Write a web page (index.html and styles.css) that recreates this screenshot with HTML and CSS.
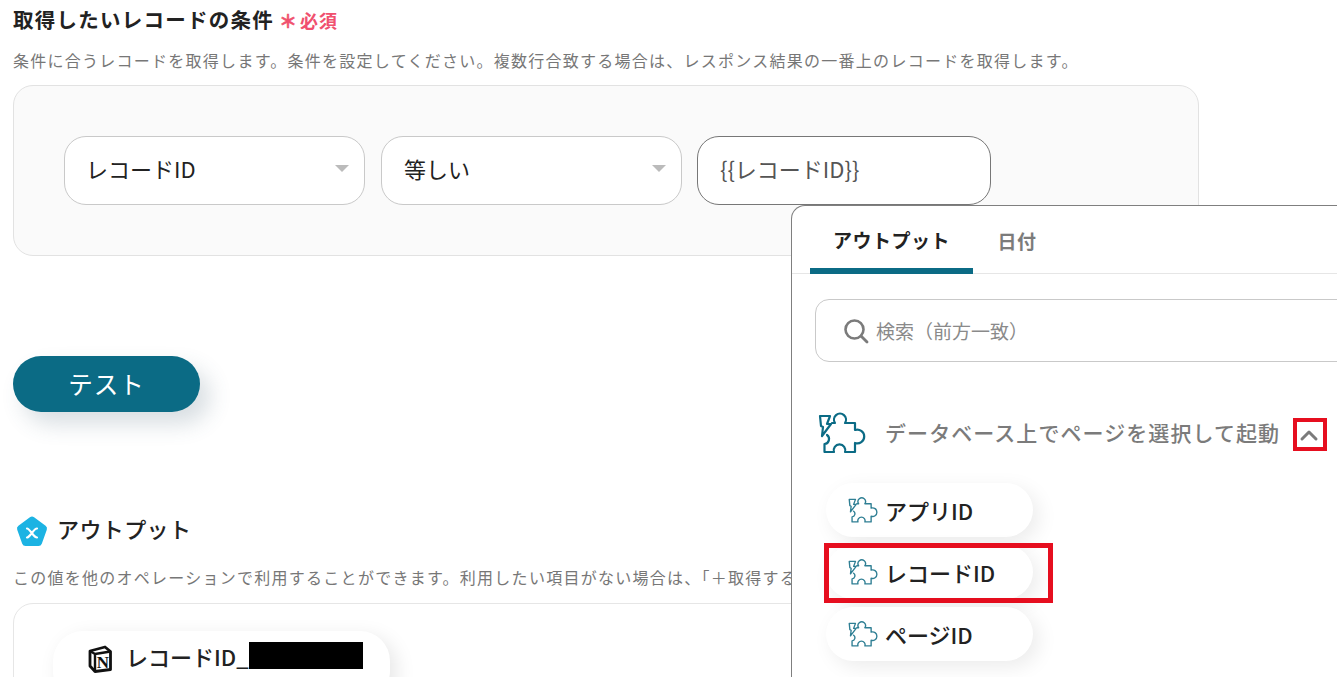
FILE: index.html
```html
<!DOCTYPE html>
<html lang="ja">
<head>
    <meta charset="UTF-8">
    <meta name="viewport" content="width=device-width, initial-scale=1.0">
    <title>取得したいレコードの条件</title>
    <link rel="stylesheet" href="styles.css">
</head>
<body>
    <svg class="defs" width="0" height="0" aria-hidden="true">
        <symbol id="puzzle" viewBox="13 10 48 44">
            <path d="M15 15 H25 L22 23 H26 L17 35 L18 26 L16 25 Z" fill="none" stroke="currentColor" stroke-width="2.2" stroke-linejoin="round"/>
            <path d="M27 22 H30 A6 6 0 1 1 40 22 H50 V29 A6.9 6.9 0 1 1 50 42 V51 H40 A5.8 5.8 0 1 0 29 51 H19.5 V43 A5 5 0 0 0 22 34" fill="none" stroke="currentColor" stroke-width="2.2" stroke-linejoin="round" stroke-linecap="round"/>
        </symbol>
    </svg>

    <div class="page">
        <h2 class="field-title">取得したいレコードの条件<span class="required"><span class="star">＊</span>必須</span></h2>
        <p class="help">条件に合うレコードを取得します。条件を設定してください。複数行合致する場合は、レスポンス結果の一番上のレコードを取得します。</p>

        <div class="condition-box">
            <div class="select select-field">レコードID<span class="caret"></span></div>
            <div class="select select-op">等しい<span class="caret"></span></div>
            <div class="select select-value">{{レコードID}}</div>
        </div>

        <button class="test-btn">テスト</button>

        <h2 class="output-title">
            <svg class="x-logo" width="32" height="36" viewBox="0 0 32 36">
                <path d="M16 10 L27.5 18.5 L22.5 32.5 H9.5 L4.5 18.5 Z" fill="#1cb3e3" stroke="#1cb3e3" stroke-width="7" stroke-linejoin="round"/>
                <path d="M11 18.5 C14 18.5 17.5 27.5 21 27.5 M21 18.5 C17.5 18.5 14 27.5 11 27.5" fill="none" stroke="#fff" stroke-width="2.2" stroke-linecap="round"/>
            </svg>
            アウトプット
        </h2>
        <p class="help help-output">この値を他のオペレーションで利用することができます。利用したい項目がない場合は、「＋取得する</p>

        <div class="output-box">
            <div class="output-chip">
                <svg class="notion" width="24" height="28" viewBox="0 0 24 28">
                    <path d="M2 6 L17 2 L22.5 6.5 V24.5 L7 26.5 L2 21 Z" fill="#fff" stroke="#111" stroke-width="2.8" stroke-linejoin="round"/>
                    <path d="M7 9 L22.5 6.5 M7 9 V26 M2 6 L7 9" fill="none" stroke="#111" stroke-width="2.4"/>
                    <text x="14.8" y="23" text-anchor="middle" class="notion-n">N</text>
                </svg>
                <span>レコードID_</span>
                <span class="redacted"></span>
            </div>
        </div>
    </div>

    <div class="popup">
        <div class="tabs">
            <div class="tab tab-active">アウトプット</div>
            <div class="tab">日付</div>
        </div>
        <div class="search">
            <svg width="26" height="26" viewBox="0 0 26 26">
                <circle cx="11.5" cy="11.5" r="9" fill="none" stroke="#7b7b7b" stroke-width="2.6"/>
                <path d="M18 18 L24 24" stroke="#7b7b7b" stroke-width="2.8" stroke-linecap="round"/>
            </svg>
            <span>検索（前方一致）</span>
        </div>
        <div class="group-head">
            <svg class="group-icon" width="48" height="44"><use href="#puzzle"/></svg>
            <span class="group-name">データベース上でページを選択して起動</span>
            <svg class="chevron" width="20" height="14" viewBox="0 0 20 14">
                <path d="M3 11 L10 4 L17 11" fill="none" stroke="#7b7b7b" stroke-width="3" stroke-linecap="round" stroke-linejoin="round"/>
            </svg>
            <span class="mark mark-chevron"></span>
        </div>
        <div class="items">
            <div class="item">
                <svg width="30" height="28"><use href="#puzzle"/></svg>アプリID
            </div>
            <div class="item">
                <svg width="30" height="28"><use href="#puzzle"/></svg>レコードID
                <span class="mark mark-item"></span>
            </div>
            <div class="item">
                <svg width="30" height="28"><use href="#puzzle"/></svg>ページID
            </div>
        </div>
    </div>
</body>
</html>
```

FILE: styles.css
```css
* {
    box-sizing: border-box;
}

html, body {
    margin: 0;
    padding: 0;
    height: 677px;
    overflow: hidden;
    background-color: #fff;
}

body {
    position: relative;
    font-family: "Noto Sans CJK JP", "Noto Sans", sans-serif;
    color: #222;
}

.defs {
    position: absolute;
}

.page {
    width: 1186px;
    height: 673px;
    margin-left: 13px;
    padding-top: 4px;
}

.field-title {
    height: 30px;
    margin: 0;
    font-size: 20.5px;
    line-height: 30px;
    font-weight: 700;
    letter-spacing: 1.25px;
    white-space: nowrap;
}

.required {
    margin-left: 5px;
    font-size: 18px;
    letter-spacing: 1px;
    color: #f0506e;
}

.star {
    margin-right: 3px;
    letter-spacing: 0;
    -webkit-text-stroke: 0.6px #f0506e;
}

.help {
    height: 22px;
    margin: 15px 0 0;
    font-size: 16px;
    line-height: 22px;
    letter-spacing: 1.26px;
    color: #777;
    white-space: nowrap;
}

.condition-box {
    display: flex;
    gap: 16px;
    height: 171px;
    margin-top: 14px;
    padding: 50px 50px 0;
    background-color: #fafafa;
    border: 1px solid #e2e2e2;
    border-radius: 20px;
}

.select {
    display: flex;
    align-items: center;
    justify-content: space-between;
    height: 69px;
    padding: 0 15px 5px 22px;
    background-color: #fff;
    border: 1px solid #c9c9c9;
    border-radius: 22px;
    font-size: 22px;
    color: #222;
}

.select-field {
    width: 301px;
    padding-left: 21px;
}

.select-op {
    width: 301px;
}

.select-value {
    width: 294px;
    margin-left: -1px;
    border-color: #777;
    color: #555;
}

.caret {
    width: 0;
    height: 0;
    border-left: 7px solid transparent;
    border-right: 7px solid transparent;
    border-top: 7px solid #bbb;
}

.test-btn {
    display: block;
    width: 187px;
    height: 56px;
    margin-top: 100px;
    padding: 0 0 2px;
    border: none;
    border-radius: 28px;
    background-color: #0b6b85;
    color: #fff;
    font-family: inherit;
    font-size: 24.5px;
    letter-spacing: 1px;
    box-shadow: 10px 12px 22px rgba(60, 90, 110, 0.2);
}

.output-title {
    display: flex;
    align-items: center;
    gap: 9px;
    height: 36px;
    margin: 98px 0 0;
    font-size: 22px;
    font-weight: 500;
    letter-spacing: 0.4px;
}

.x-logo {
    margin-left: 3px;
}

.help-output {
    margin-top: 20px;
}

.output-box {
    height: 200px;
    margin-top: 15px;
    padding: 27px 39px 0;
    background-color: #fff;
    border: 1px solid #e6e6e6;
    border-radius: 20px;
}

.output-chip {
    display: flex;
    align-items: center;
    width: 337px;
    height: 70px;
    padding: 0 0 21px 35px;
    border-radius: 30px;
    background-color: #fff;
    box-shadow: 6px 6px 20px rgba(0, 0, 0, 0.1);
    font-size: 22px;
    font-weight: 500;
    white-space: nowrap;
}

.notion {
    flex: none;
    margin-right: 14px;
    margin-top: 6px;
}

.notion-n {
    font-family: "Liberation Serif", serif;
    font-size: 17px;
    font-weight: 700;
    fill: #111;
}

.redacted {
    display: block;
    width: 114px;
    height: 27px;
    background-color: #000;
}

.popup {
    position: absolute;
    left: 791px;
    top: 205px;
    width: 546px;
    height: 472px;
    overflow: hidden;
    background-color: #fff;
    border: 1px solid #7f7f7f;
    border-right: none;
    border-bottom: none;
    border-radius: 14px 0 0 0;
}

.tabs {
    display: flex;
    height: 68px;
    padding-left: 18px;
    border-bottom: 1px solid #e6e6e6;
}

.tab {
    display: flex;
    align-items: center;
    justify-content: center;
    width: 163px;
    padding-top: 2px;
    font-size: 19px;
    font-weight: 700;
    letter-spacing: 0.5px;
    color: #7b7b7b;
}

.tab:last-child {
    width: 88px;
}

.tab-active {
    padding-top: 4px;
    color: #222;
    border-bottom: 6px solid #0b6b85;
    border-radius: 6px 6px 0 0;
    margin-bottom: -1px;
}

.search {
    display: flex;
    align-items: center;
    gap: 7px;
    width: 600px;
    height: 63px;
    margin: 25px 0 0 23px;
    padding-left: 27px;
    border: 1px solid #c9c9c9;
    border-radius: 14px;
    font-size: 19px;
    color: #8a8a8a;
}

.group-head {
    position: relative;
    display: flex;
    align-items: center;
    height: 46px;
    margin: 48px 0 0 26px;
    color: #0b6b85;
}

.group-name {
    margin-left: 19px;
    padding-bottom: 2px;
    font-size: 21px;
    font-weight: 500;
    letter-spacing: 1.07px;
    color: #7b7b7b;
    white-space: nowrap;
}

.chevron {
    margin-left: 19px;
    margin-top: 4px;
}

.mark {
    position: absolute;
    border: 4px solid #e60e1f;
}

.mark-chevron {
    left: 475px;
    top: 8px;
    width: 34px;
    height: 33px;
}

.items {
    display: flex;
    flex-direction: column;
    gap: 8px;
    align-items: flex-start;
    margin: 27px 0 0 34px;
}

.item {
    position: relative;
    display: flex;
    align-items: center;
    gap: 7px;
    width: 207px;
    height: 54px;
    padding-left: 22px;
    border-radius: 27px;
    background-color: #fff;
    box-shadow: 6px 6px 20px rgba(0, 0, 0, 0.08);
    font-size: 22px;
    font-weight: 500;
    color: #222;
}

.item svg {
    color: #2f7f94;
}

.mark-item {
    left: -2px;
    top: -2px;
    width: 229px;
    height: 60px;
    border-width: 5px;
}
```
